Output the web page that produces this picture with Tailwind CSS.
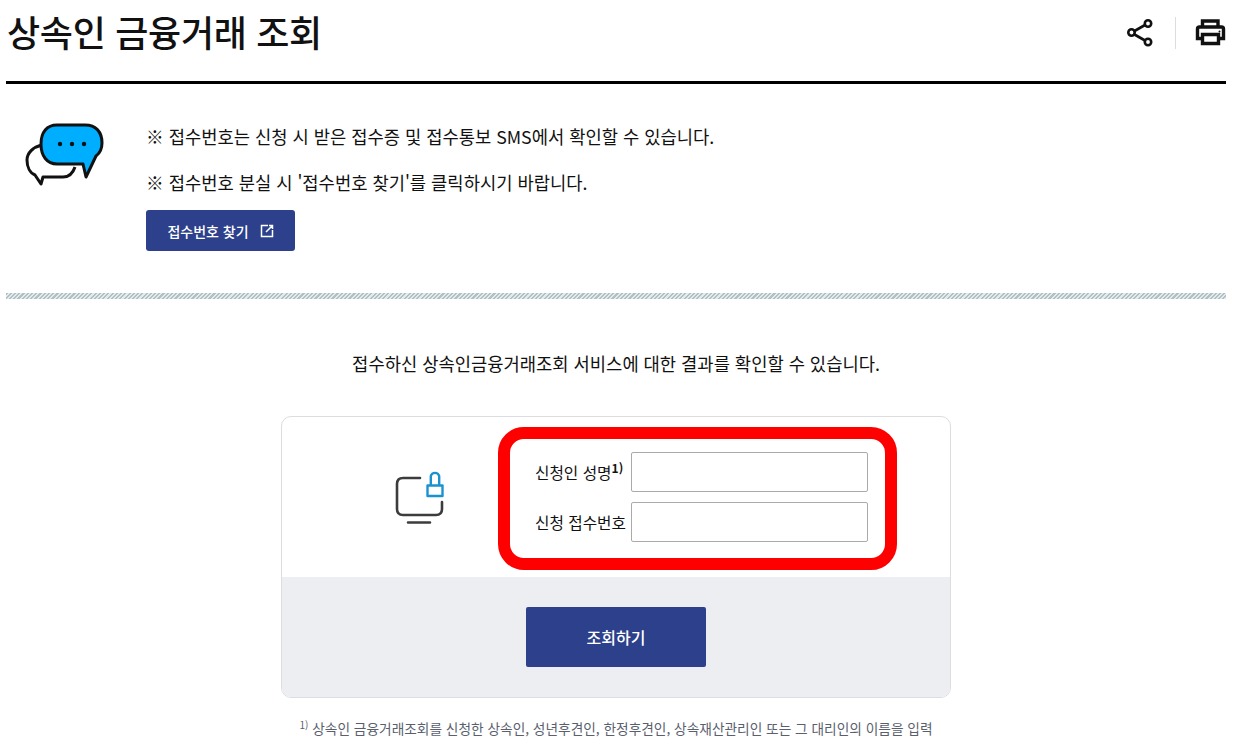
<!DOCTYPE html>
<html lang="ko">
<head>
  <meta charset="UTF-8" />
  <title>상속인 금융거래 조회</title>
  <script src="https://cdn.jsdelivr.net/npm/@tailwindcss/browser@4"></script>
</head>
<body class="bg-white h-[747px] overflow-hidden font-['Noto_Sans_CJK_KR','Noto_Sans',sans-serif] text-[#111]">
  <main class="w-[1220px] ml-[6px]">
    <!-- page title -->
    <header class="h-[84px] flex justify-between border-b-[3px] border-black">
      <h1 class="pl-[1px] pt-[6px] text-[36px] leading-[50px] font-medium tracking-[-0.3px]">상속인 금융거래 조회</h1>
      <div class="flex items-start pt-[17px]">
        <svg class="w-[26px] h-[30px] mr-[22px]" viewBox="0 0 26 30" fill="none" stroke="#111" stroke-width="2.6">
          <circle cx="4.5" cy="15.5" r="3.2" /><circle cx="21" cy="6.5" r="3.2" /><circle cx="21" cy="25" r="3.2" />
          <path d="M7.5 14 18 8M7.5 17.5 18 23.5" />
        </svg>
        <div class="w-px h-[32px] bg-[#ddd] mr-[19px]"></div>
        <svg class="w-[31px] h-[30px]" viewBox="0 0 31 30" fill="none" stroke="#111" stroke-width="3.4">
          <path d="M7.5 10V4h15.500v6" />
          <path d="M6 21.500H2.500V12q0-2 2-2h22q2 0 2 2v9.500H25" />
          <path d="M7.500 17.500h16v9h-16z" />
          <circle cx="24.500" cy="14.500" r="1" fill="#111" stroke="none" />
        </svg>
      </div>
    </header>

    <!-- notice -->
    <section class="h-[209px] flex pt-[39px]">
      <svg class="w-[80px] h-[64px] ml-[19px] shrink-0" viewBox="0 0 80 64" fill="none" stroke="#111" stroke-width="3">
        <path d="M17 22C8 24 2 30 2 37c0 7 3 13 8 15l6 9 2-7h20c6 0 10-4 12-10" fill="#fff" stroke-linejoin="round" />
        <path d="M32 2h28c11 0 17 7 17 18 0 6-2 10-6 13l-10 21-3-13H32C22 41 16 33 16 21 16 9 22 2 32 2z" fill="#00aeff" stroke-linejoin="round" />
        <circle cx="35" cy="21" r="2.2" fill="#111" stroke="none" /><circle cx="47" cy="21" r="2.2" fill="#111" stroke="none" /><circle cx="59" cy="21" r="2.2" fill="#111" stroke="none" />
      </svg>
      <div class="ml-[41px] text-[17.700px] leading-[26px]">
        <p class="mb-[20px]">※ 접수번호는 신청 시 받은 접수증 및 접수통보 SMS에서 확인할 수 있습니다.</p>
        <p class="mb-[15px]">※ 접수번호 분실 시 '접수번호 찾기'를 클릭하시기 바랍니다.</p>
        <a class="w-[149px] h-[41px] rounded-[3px] bg-[#2c408c] text-white text-[14px] font-medium flex items-center justify-center gap-[11px]">
          접수번호 찾기
          <svg class="w-[14px] h-[14px]" viewBox="0 0 14 14" fill="none" stroke="#fff" stroke-width="1.5">
            <path d="M8 1.500H1.500v11h11V6M9 1.500h3.500V5M12.500 1.500 6 8" />
          </svg>
        </a>
      </div>
    </section>

    <!-- divider -->
    <div class="h-[6px] bg-[repeating-linear-gradient(135deg,#afc0c7_0,#afc0c7_1.500px,#e2eaec_1.500px,#e2eaec_3px)]"></div>

    <p class="mt-[51px] text-center text-[17.700px] leading-[26px]">접수하신 상속인금융거래조회 서비스에 대한 결과를 확인할 수 있습니다.</p>

    <!-- lookup form -->
    <section class="relative w-[670px] h-[282px] mt-[40px] ml-[275px] border border-[#dcdde0] rounded-[10px] overflow-hidden flex flex-col">
      <div class="h-[160px] flex">
        <svg class="w-[52px] h-[56px] ml-[112px] mt-[53px] shrink-0" viewBox="0 0 52 56" fill="none">
          <path d="M26 8H9q-6 0-6 6v25q0 6 6 6h33q6 0 6-6v-7M14 52.500h22" stroke="#3c3c3e" stroke-width="2.600" stroke-linecap="round" />
          <path d="M33.500 15.500h15V26h-15zM36.800 15.500V6a4.400 4.400 0 0 1 8.400 0v9.500" stroke="#1b92d0" stroke-width="2.400" stroke-linejoin="round" />
        </svg>
        <div class="ml-[89px] pt-[35px] text-[15.700px]">
          <label class="flex items-center h-[40px] mb-[10px]">
            <span class="w-[96px] pt-[1px]">신청인 성명<sup class="text-[12px] font-bold">1)</sup></span>
            <input class="w-[237px] h-[40px] border border-[#aaa] rounded-[2px]" />
          </label>
          <label class="flex items-center h-[40px]">
            <span class="w-[96px] pt-[1px]">신청 접수번호</span>
            <input class="w-[237px] h-[40px] border border-[#aaa] rounded-[2px]" />
          </label>
        </div>
      </div>
      <div class="flex-1 bg-[#edeef2] flex justify-center pt-[30px]">
        <button class="w-[180px] h-[60px] rounded-[2px] bg-[#2c408c] text-white text-[16px] font-medium">조회하기</button>
      </div>
    </section>

    <p class="mt-[20px] text-center text-[13.700px] leading-[20px] text-[#5a5f6e]"><sup class="text-[10px]">1)</sup> 상속인 금융거래조회를 신청한 상속인, 성년후견인, 한정후견인, 상속재산관리인 또는 그 대리인의 이름을 입력</p>
  </main>

  <!-- red annotation on top of the form -->
  <div class="absolute left-[498px] top-[427px] w-[399px] h-[143px] border-[12px] border-[#f00] rounded-[26px]"></div>
</body>
</html>
